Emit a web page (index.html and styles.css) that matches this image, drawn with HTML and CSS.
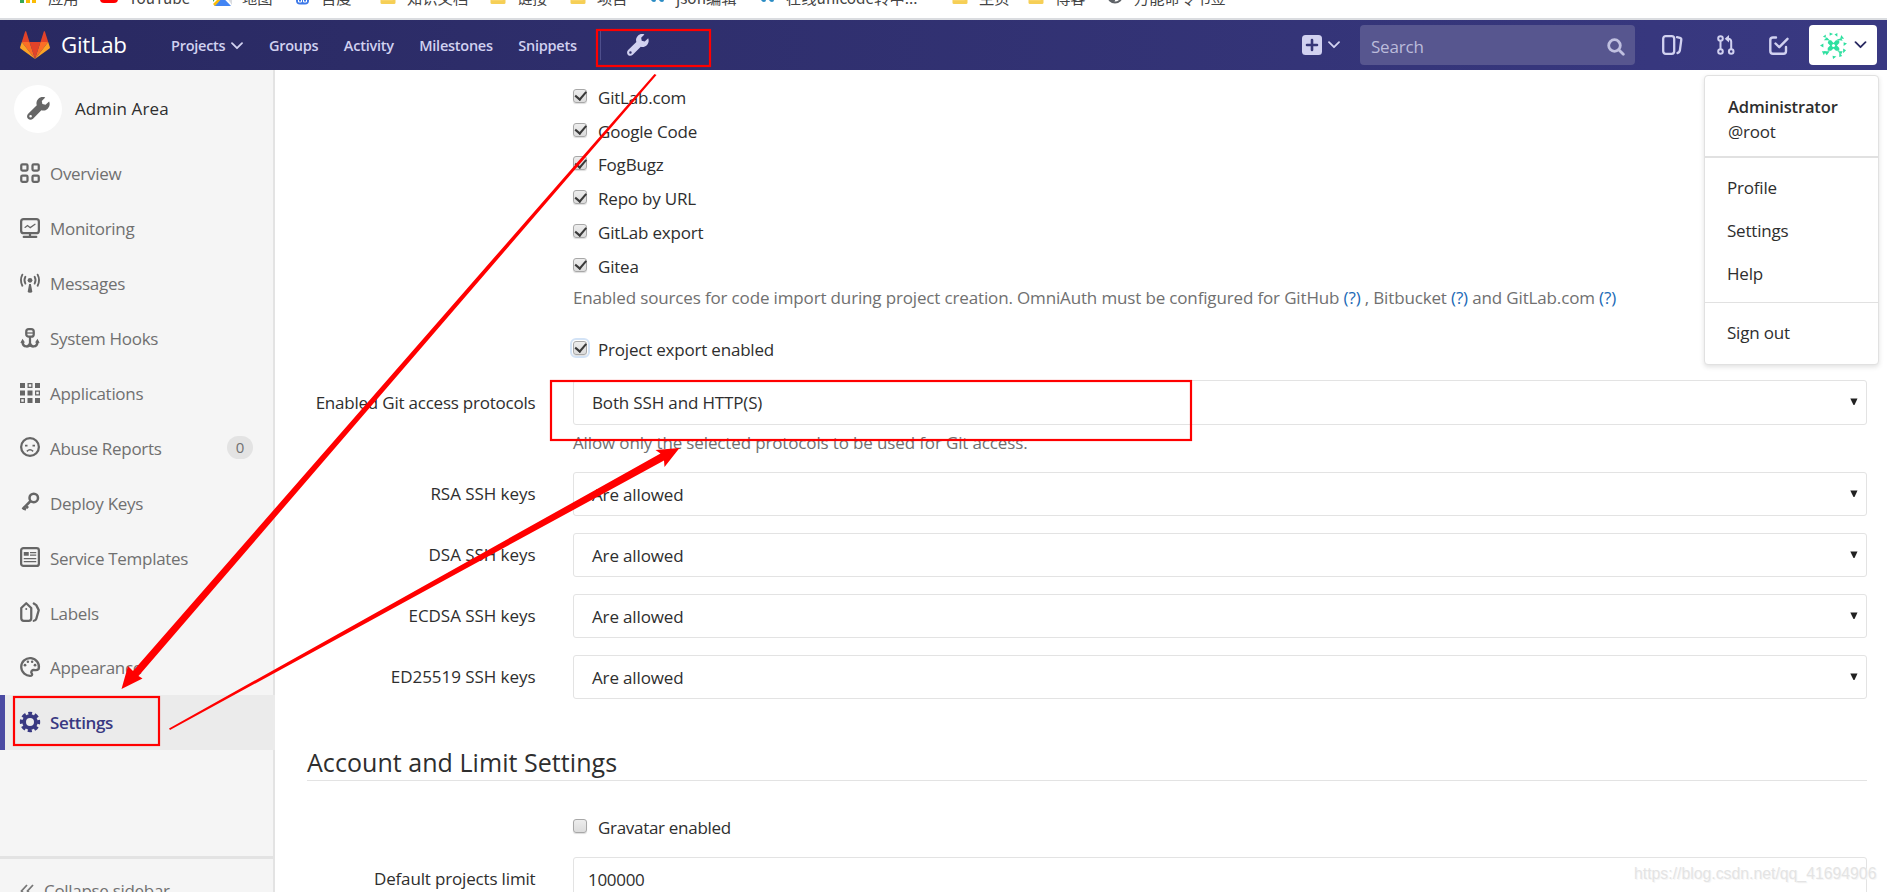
FILE: index.html
```html
<!DOCTYPE html>
<html lang="en">
<head>
<meta charset="utf-8">
<title>Settings · Admin Area · GitLab</title>
<link rel="stylesheet" href="styles.css">
</head>
<body>
<svg class="defs" width="0" height="0">
  <symbol id="wrench" viewBox="0 0 16 16"><path fill-rule="evenodd" d="M15.4 3.1 12.9 5.4 10.7 4.9 10.3 2.8 12.7.4C11 -.3 9 .1 7.800 1.400 6.600 2.600 6.300 4.300 6.800 5.800L.8 11.700c-1 1-1 2.500-.1 3.500 1 .9 2.500.9 3.500-.1L10 9.200c1.500.5 3.200.1 4.400-1.100 1.400-1.300 1.700-3.300 1-5zM2.500 14.300a.9.9 0 1 1 0-1.800.9.9 0 0 1 0 1.800z"/></symbol>
  <symbol id="folder" viewBox="0 0 16 16"><path fill="#f6cf56" d="M0 0h16v13.500q0 1.500-1.500 1.500h-13Q0 15 0 13.500z"/><path fill="#fde293" d="M1 0h12v11H1z"/></symbol>
  <symbol id="chev" viewBox="0 0 12 8"><path fill="none" stroke="currentColor" stroke-width="1.800" stroke-linecap="round" stroke-linejoin="round" d="M1 1.200l5 5 5-5"/></symbol>
  <symbol id="tri" viewBox="0 0 8 7"><path fill="#222" d="M.3.500h7.200L4.500 7h-1z"/></symbol>
  <symbol id="dots" viewBox="0 0 14 6"><path fill="#2b8cc4" d="M0 0h5v3q0 2-2 2T0 3zM8 0h5v3q0 2-2 2T8 3z"/></symbol>
</svg>

<div class="bookmarks">
  <span class="bm"><svg width="17" height="10"><path fill="#34a853" d="M0 5h4v4H0z"/><path fill="#fbbc05" d="M6 5h4v4H6z"/><path fill="#fbbc05" d="M12 5h4v4h-4z"/></svg><b>应用</b></span>
  <span class="bm"><svg width="18" height="10"><rect y="-6" width="18" height="15" rx="4" fill="#f00"/></svg><b>YouTube</b></span>
  <span class="bm maps"><svg width="21" height="12"><path fill="#34a853" d="M1 0h6L1 8z"/><path fill="#4285f4" d="M2 12 10.500 3 19 12z"/><path fill="#fbbc05" d="M1 10 8 3l3 0-8 9z"/><path fill="#dadce0" d="M12 0h8v11z"/></svg><b>地图</b></span>
  <span class="bm"><svg width="14" height="11"><rect y="-4" width="13" height="14.500" rx="4" fill="#3c78e8"/><path fill="none" stroke="#fff" d="M2.500 5v3h3V5zM7.500 5v3h3V5"/></svg><b>百度</b></span>
  <span class="bm"><svg width="16" height="15"><use href="#folder"/></svg><b>知识文档</b></span>
  <span class="bm"><svg width="16" height="15"><use href="#folder"/></svg><b>链接</b></span>
  <span class="bm"><svg width="16" height="15"><use href="#folder"/></svg><b>项目</b></span>
  <span class="bm"><svg width="14" height="6"><use href="#dots"/></svg><b>json编辑</b></span>
  <span class="bm"><svg width="14" height="6"><use href="#dots"/></svg><b>在线unicode转中...</b></span>
  <span class="bm"><svg width="16" height="15"><use href="#folder"/></svg><b>主页</b></span>
  <span class="bm"><svg width="16" height="15"><use href="#folder"/></svg><b>博客</b></span>
  <span class="bm"><svg width="16" height="10"><circle cx="8" cy="1.500" r="7" fill="#fff" stroke="#5f6368" stroke-width="2"/><path fill="#5f6368" d="M2 0h5l2 4-2 5Q2 7 2 0z"/></svg><b>万能命令书签</b></span>
</div>

<header class="nav">
  <svg class="logo" viewBox="0 0 30 28"><path fill="#e24329" d="M15 28 20.500 11h-11z"/><path fill="#fc6d26" d="M15 28 9.500 11H1.800zM15 28l5.500-17h7.700z"/><path fill="#fca326" d="M1.800 11 .1 16.200c-.15.5 0 1 .4 1.300L15 28zM28.200 11l1.700 5.200c.15.500 0 1-.4 1.300L15 28z"/><path fill="#e24329" d="M1.800 11h7.700L6.200.6c-.2-.5-.9-.5-1.100 0zM28.200 11h-7.700L23.800.6c.2-.5.9-.5 1.100 0z"/></svg>
  <span class="brand">GitLab</span>
  <nav class="links">
    <a>Projects<svg class="chev" width="12" height="8"><use href="#chev"/></svg></a>
    <a>Groups</a><a>Activity</a><a>Milestones</a><a>Snippets</a>
  </nav>
  <span class="sep"></span>
  <svg class="nav-wrench" width="22" height="22"><use href="#wrench"/></svg>
  <div class="tools">
    <svg class="plus" width="20" height="20"><rect width="20" height="20" rx="3.500" fill="#d1d1f0"/><path stroke="#353577" stroke-width="2.600" stroke-linecap="round" d="M10 5v10M5 10h10"/></svg>
    <svg class="pchev" width="12" height="8"><use href="#chev"/></svg>
    <div class="search"><span>Search</span><svg width="18" height="18" fill="none" stroke="#c0c0e0" stroke-width="2.800"><circle cx="7.500" cy="7.500" r="5.800"/><path stroke-linecap="round" d="M12 12l4.300 4.300"/></svg></div>
    <svg class="issues" width="21" height="20" fill="none" stroke="#d1d1f0" stroke-width="2.300"><rect x="1.200" y="1.200" width="11" height="17.600" rx="2.500"/><path stroke-linecap="round" stroke-linejoin="round" d="M15 2.200l3 .6q1.500.4 1.300 2l-1.500 11q-.3 1.800-2.300 2.200"/></svg>
    <svg class="mr" width="18" height="20" fill="none" stroke="#d1d1f0" stroke-width="2"><circle cx="3.500" cy="3.500" r="2.300"/><circle cx="3.500" cy="16.500" r="2.300"/><circle cx="14.200" cy="16.500" r="2.300"/><path d="M3.500 6v8M14.200 14V6.500q0-2.800-3.500-2.800"/><path fill="#d1d1f0" stroke="none" d="M12 0v7.500L7.700 3.700z"/></svg>
    <svg class="todo" width="20" height="20" fill="none" stroke="#d1d1f0" stroke-width="2.400" stroke-linecap="round" stroke-linejoin="round"><path d="M7 2.500H4Q1.300 2.500 1.300 5v11Q1.300 18.800 4 18.800h10.500q2.500 0 2.500-2.500V12"/><path d="M6.500 8.500l3.800 3.700L18.500 3.800"/></svg>
    <div class="avatar">
      <svg width="27" height="27" viewBox="0 0 28 28" fill="#2ee0a0"><path d="M9 8.500l2.500 0 2.500 3 2.500-3 3.500 0v3L17.500 14l2.500 2.500v3h-3.500l-2.500-2.500-2.500 2.500H8v-3l2.500-2.500L8 11.500z"/><circle cx="14" cy="14" r="1.600" fill="#fff"/><path d="M4 8.500l6 0-3-3zM17 8l5-1.500L23.500 9zM4 20h6l-3 4zM18 20l5.500 0-1.500 3z"/><path d="M10 .5l3.500 1.500L10 4zM18 1v4l-3-2.500zM3 5l3-2.500L6 6zM22 3l3 4-4 0zM0 14l3.500-2v4zM28 12l-3.500-1.500v4zM2 20l4 0-2 4zM27 19l-3-2 0 5zM13 24.500l4 1-3.500 2.500zM20 21l3 4-3 1z"/></svg>
      <svg width="13" height="8"><use href="#chev"/></svg>
    </div>
  </div>
</header>

<div class="page">
  <aside class="side">
    <div class="head"><span class="circle"><svg width="23" height="23"><use href="#wrench"/></svg></span>Admin Area</div>
    <a class="item"><svg viewBox="0 0 16 16" class="st"><rect x="1" y="1" width="5" height="5" rx="1"/><rect x="10" y="1" width="5" height="5" rx="1"/><rect x="1" y="10" width="5" height="5" rx="1"/><rect x="10" y="10" width="5" height="5" rx="1"/></svg>Overview</a>
    <a class="item"><svg viewBox="0 0 16 16" class="st"><rect x=".9" y=".9" width="14.200" height="11.200" rx="2"/><path stroke-width="1" stroke-linecap="round" d="M4 7.500l2-1.500 2.200 1.700L12 5"/><path stroke-linecap="round" d="M3 15.100h10M8 12v3"/></svg>Monitoring</a>
    <a class="item"><svg viewBox="0 0 16 16" class="st"><circle cx="8" cy="5.800" r="1.900" fill="#666" stroke="none"/><path fill="#666" stroke="none" d="M7.300 8.800h1.400l1.100 6q0 1-1.800 1t-1.800-1z"/><path stroke-width="1.500" stroke-linecap="round" d="M4.300 3Q2.800 5.700 4.300 8.500M11.700 3q1.500 2.700 0 5.500M1.900 1.300Q-.4 5.700 1.900 10.200M14.100 1.300q2.300 4.400 0 8.900"/></svg>Messages</a>
    <a class="item"><svg viewBox="0 0 16 16" class="st"><rect x="5" y=".9" width="6" height="6" rx="2"/><path d="M5.500 4h5" stroke-width="1"/><path d="M8 7v8"/><path stroke-width="2" d="M2 10.500q0 4 3.200 4.200Q7.500 14.700 8 12.500q.5 2.200 2.800 2.200 3.200-.2 3.200-4.200"/><path fill="#666" stroke="none" d="M.3 12 2 8.500l2 3zM15.700 12 14 8.500l-2 3z"/></svg>System Hooks</a>
    <a class="item"><svg viewBox="0 0 16 16" fill="#666"><path d="M0 0h4v4H0zM12 0h4v4h-4zM0 6h4v4H0zM6 6h4v4H6zM6 12h4v4H6zM12 12h4v4h-4z"/><path fill="none" stroke="#666" stroke-width="1" d="M6.500.5h3v3h-3zM12.500 6.500h3v3h-3zM.5 12.500h3v3h-3z"/></svg>Applications</a>
    <a class="item"><svg viewBox="0 0 16 16" class="st"><circle cx="8" cy="8" r="7.100"/><path fill="#666" stroke="none" d="M4 6.200h2v1.300H4zM10 6.200h2v1.300h-2z"/><path stroke-width="1.200" d="M5.500 11.500Q8 9 10.500 11.500"/></svg>Abuse Reports<span class="badge">0</span></a>
    <a class="item"><svg viewBox="0 0 16 16" class="st"><circle cx="11" cy="4.700" r="3.400" stroke-width="2"/><path stroke-width="2" d="M8.500 7.200 2 13.700M2 12.700l2.800 1.300M4.500 11l2 1.800"/></svg>Deploy Keys</a>
    <a class="item"><svg viewBox="0 0 16 16" class="st"><rect x=".9" y=".9" width="14.200" height="14.200" rx="1.800"/><path fill="#666" stroke="none" d="M3 4h4v3H3z"/><path stroke-width="1" d="M8 4.500h5M8 6.500h5M3 9.300h10M3 11.600h10"/></svg>Service Templates</a>
    <a class="item"><svg viewBox="0 0 16 16" class="st"><path stroke-linejoin="round" d="M1 4.800 5 1l4 3.800V13q0 2-2 2H3q-2 0-2-2z"/><circle cx="5" cy="5.500" r=".8" fill="#666" stroke="none"/><path stroke-linecap="round" stroke-linejoin="round" d="M11 1.200l2 1.300 2 4-2 7q-.4 1.300-2 1.500"/></svg>Labels</a>
    <a class="item"><svg viewBox="0 0 16 16" class="st"><path stroke-linejoin="round" d="M15 9.500A7.100 7.100 0 1 0 9 15q1.500-.8 0-2.500 0-2 2-2.200 2.500.8 4-.8z"/><g fill="#666" stroke="none"><circle cx="4" cy="6.500" r="1.100"/><circle cx="6.300" cy="3.800" r="1"/><circle cx="9.700" cy="3.800" r="1"/><circle cx="12" cy="6.500" r="1.100"/></g></svg>Appearance</a>
    <a class="item active"><svg viewBox="0 0 16 16"><path fill="none" stroke="#393982" stroke-width="2.900" stroke-dasharray="3.200 2.062" stroke-dashoffset="1.600" d="M8 1.300a6.700 6.700 0 1 1 0 13.400 6.700 6.700 0 0 1 0-13.400"/><circle cx="8" cy="8" r="4.700" fill="none" stroke="#393982" stroke-width="3"/></svg>Settings</a>
    <div class="collapse"><svg width="14" height="14" fill="none" stroke="#777" stroke-width="1.800"><path d="M7 1 1.500 7 7 13M13 1 7.500 7l5.500 6"/></svg>Collapse sidebar</div>
  </aside>

  <main class="main">
    <div class="checks">
      <label class="check on"><i></i>GitLab.com</label>
      <label class="check on"><i></i>Google Code</label>
      <label class="check on"><i></i>FogBugz</label>
      <label class="check on"><i></i>Repo by URL</label>
      <label class="check on"><i></i>GitLab export</label>
      <label class="check on"><i></i>Gitea</label>
    </div>
    <p class="help long">Enabled sources for code import during project creation. OmniAuth must be configured for GitHub <a>(?)</a> , Bitbucket <a>(?)</a> and GitLab.com <a>(?)</a></p>
    <label class="check on focus"><i></i>Project export enabled</label>
    <div class="row first"><span class="label">Enabled Git access protocols</span><div class="field">Both SSH and HTTP(S)<svg width="8" height="7"><use href="#tri"/></svg></div></div>
    <p class="help short">Allow only the selected protocols to be used for Git access.</p>
    <div class="row"><span class="label">RSA SSH keys</span><div class="field">Are allowed<svg width="8" height="7"><use href="#tri"/></svg></div></div>
    <div class="row"><span class="label">DSA SSH keys</span><div class="field">Are allowed<svg width="8" height="7"><use href="#tri"/></svg></div></div>
    <div class="row"><span class="label">ECDSA SSH keys</span><div class="field">Are allowed<svg width="8" height="7"><use href="#tri"/></svg></div></div>
    <div class="row"><span class="label">ED25519 SSH keys</span><div class="field">Are allowed<svg width="8" height="7"><use href="#tri"/></svg></div></div>
    <h2>Account and Limit Settings</h2>
    <label class="check grav"><i></i>Gravatar enabled</label>
    <div class="row limit"><span class="label">Default projects limit</span><div class="field input">100000</div></div>
  </main>
</div>

<div class="menu">
  <div class="who"><strong>Administrator</strong><span>@root</span></div>
  <div class="group"><a>Profile</a><a>Settings</a><a>Help</a></div>
  <div class="out"><a>Sign out</a></div>
</div>

<svg class="marks" width="1887" height="892" viewBox="0 0 1887 892">
  <g fill="none" stroke="#f00" stroke-width="2.200"><rect x="597" y="30" width="113" height="36"/><rect x="14" y="697" width="145" height="48"/><rect x="551" y="381" width="640" height="59"/></g>
  <g fill="#f00"><path d="M654.500 74 133 671 128 666 121.500 689 142.500 678.500 138.500 676 656.500 75z"/><path d="M169 728.500 660.500 453.500 655.500 450 679.500 448 664.500 467 664 460.500 170 730z"/></g>
</svg>
<div class="watermark">https://blog.csdn.net/qq_41694906</div>
</body>
</html>
```
FILE: styles.css
```css
* { box-sizing: border-box; }
body {
  margin: 0; width: 1887px; height: 892px; overflow: hidden; position: relative; background: #fff;
  font: 17px/26px "Open Sans", "Noto Sans CJK SC", sans-serif; letter-spacing: -0.2px; color: #2e2e2e;
}
.defs { position: absolute; }
.bookmarks {
  height: 20px; overflow: hidden; border-bottom: 2px solid #dadce0; padding-left: 20px;
  display: grid; grid-template-columns: 80px 112px 84px 84px 110px 80px 81px 110px 191px 76px 79px 200px;
}
.bm { display: flex; align-items: flex-start; gap: 11px; height: 18px; white-space: nowrap; }
.maps { gap: 9px; }
.bm svg { flex: none; margin-top: -6px; overflow: hidden; }
.bm svg[height="15"] { margin-top: -10px; }
.bm svg[height="6"] { margin-top: -3px; }
.bm b { font: 15.300px/20px "Noto Sans CJK SC", sans-serif; letter-spacing: 0; margin-top: -13px; color: #444; }

.nav { height: 50px; display: flex; align-items: center; padding: 0 10px 0 20px; background: linear-gradient(to right, #292961, #393982); color: #d1d1f0; }
.logo { width: 30px; height: 28px; }
.brand { margin-left: 11px; width: 110px; color: #fff; font-size: 22.300px; letter-spacing: -0.3px; line-height: 48px; height: 50px; padding-top: 1px; }
.links { display: flex; gap: 25.500px; font-size: 14.500px; font-weight: 600; letter-spacing: -0.250px; width: 429px; padding-top: 1px; }
.links a { display: flex; align-items: center; white-space: nowrap; }
.links .chev { margin-left: 6px; }
.sep { width: 1px; height: 30px; background: #4f4f8c; }
.nav-wrench { margin-left: 26px; fill: #d1d1f0; }
.tools { margin-left: auto; display: flex; align-items: center; }
.pchev { margin: 0 20px 0 6px; }
.search { width: 275px; height: 40px; border-radius: 4px; background: #57568f; padding: 3px 10px 0 11px; display: flex; align-items: center; justify-content: space-between; color: #bcbcdb; }
.issues { margin-left: 27px; }
.mr { margin-left: 34px; }
.todo { margin-left: 34px; }
.avatar { margin-left: 20px; width: 68px; height: 40px; border-radius: 4px; background: #fff; color: #292961; display: flex; align-items: center; gap: 7px; padding-left: 11px; }

.page { display: flex; height: 822px; }
.side { width: 275px; flex: none; background: #f5f5f5; border-right: 2px solid #e3e3e3; display: flex; flex-direction: column; color: #707070; }
.head { display: flex; align-items: center; gap: 13px; padding: 1px 0 0 14px; height: 76px; color: #2e2e2e; font-weight: 500; letter-spacing: 0.1px; }
.circle { width: 48px; height: 48px; border-radius: 50%; background: #fff; display: flex; align-items: center; justify-content: center; fill: #666; }
.item { height: 54.900px; display: flex; align-items: center; gap: 10px; padding: 2px 20px 0 20px; letter-spacing: -0.3px; }
.item svg { width: 20px; height: 20px; flex: none; margin-top: -3px; overflow: visible; }
.st { fill: none; stroke: #666; stroke-width: 1.800; }
.badge { margin-left: auto; width: 26px; height: 23px; border-radius: 12px; background: #e3e3e3; font-size: 15px; line-height: 23px; text-align: center; margin-top: -3px; }
.active { background: #ebebeb; border-left: 5px solid #4b4ba3; padding-left: 15px; color: #393982; font-weight: 600; font-size: 17px; letter-spacing: -0.350px; margin-right: -2px; }
.collapse { margin-top: auto; height: 36px; border-top: 3px solid #e3e3e3; padding: 19px 0 0 20px; display: flex; gap: 10px; line-height: 26px; white-space: nowrap; overflow: hidden; letter-spacing: -0.3px; }
.collapse svg { flex: none; margin-top: 6px; }

.main { flex: 1; padding: 11px 20px 0 32px; overflow: hidden; }
.check { display: flex; align-items: center; height: 33.800px; padding-left: 266px; gap: 11px; }
.check i { width: 14px; height: 14px; border: 1px solid #a8a8a8; border-radius: 3px; background: linear-gradient(#ededed, #dcdcdc); margin-top: -4px; flex: none; box-shadow: 0 1px 1px #ddd; }
.on i { display: grid; place-items: center; }
.on i::after { content: ""; width: 5px; height: 9px; border: solid #3a3a3a; border-width: 0 2.500px 2.500px 0; transform: rotate(40deg) translate(-0.500px, -1px); }
.focus i { outline: 2px solid #d3e3f6; outline-offset: 1px; }
.help { margin: 1px 0 0 266px; color: #707070; white-space: nowrap; }
.help a { color: #1b69b6; }
.long { letter-spacing: -0.150px; margin-bottom: 22px; }
.short { margin: 7.500px 0 16.600px 266px; letter-spacing: -0.140px; }
.row { display: grid; grid-template-columns: 228.500px 1fr; column-gap: 37.500px; height: 42px; margin-bottom: 19px; }
.label { text-align: right; line-height: 44px; letter-spacing: -0.050px; }
.field { border: 1px solid #e3e3e3; border-radius: 3px; padding: 2px 8px 0 18px; display: flex; align-items: center; justify-content: space-between; letter-spacing: -0.150px; }
.field svg { margin-top: -3px; }
.first { margin: 13.200px 0 0; height: 42.500px; }
.first .label { letter-spacing: -0.220px; padding-top: 1px; }
h2 { font-size: 25px; font-weight: 400; line-height: 36px; margin: 46.500px 0 30.500px; border-bottom: 1px solid #e3e3e3; letter-spacing: 0.050px; }
.limit { margin-top: 12px; }
.limit .label { letter-spacing: -0.160px; }
.grav { letter-spacing: -0.300px; }
.input { padding-left: 14px; letter-spacing: -0.300px; }

.menu { position: absolute; left: 1704px; top: 75px; width: 175px; height: 290px; background: #fff; border: 1px solid #e1e1e1; border-radius: 4px; box-shadow: 0 2px 5px rgba(0,0,0,.12); }
.who { height: 82px; padding: 18px 0 0 23px; border-bottom: 2px solid #e1e1e1; display: flex; flex-direction: column; line-height: 25px; }
.who strong { font-weight: 600; font-size: 16.500px; letter-spacing: -0.150px; }
.group { height: 145px; padding: 8px 0 0 22px; border-bottom: 1px solid #e1e1e1; }
.menu a { display: block; line-height: 43px; }
.out { padding: 8px 0 0 22px; }
.marks { position: absolute; left: 0; top: 0; }
.watermark { position: absolute; left: 1634px; top: 861px; font: 15.800px/26px "Liberation Sans", sans-serif; letter-spacing: 0; color: #e4e4e4; text-shadow: 1px 1px 0 #f6f6f6; }
```
